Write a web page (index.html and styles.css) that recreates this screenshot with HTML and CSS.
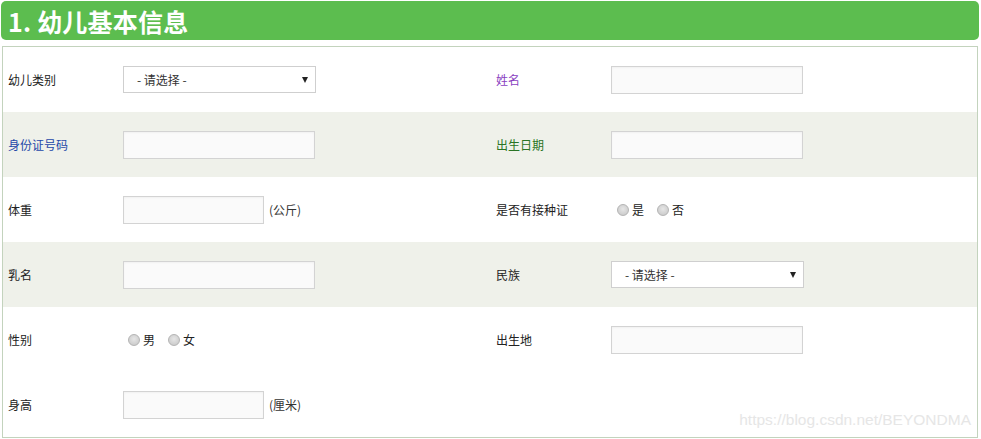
FILE: index.html
```html
<!DOCTYPE html>
<html lang="zh">
<head>
<meta charset="utf-8">
<title>幼儿基本信息</title>
<link rel="stylesheet" href="styles.css">
</head>
<body>
<div class="page">
  <h2 class="title">1. 幼儿基本信息</h2>
  <div class="panel">
    <div class="row">
      <span class="label">幼儿类别</span>
      <span class="field"><span class="select-wrap"><select class="select"><option>- 请选择 -</option></select></span></span>
      <span class="label purple">姓名</span>
      <span class="field"><input class="input" type="text"></span>
    </div>
    <div class="row alt">
      <span class="label blue">身份证号码</span>
      <span class="field"><input class="input" type="text"></span>
      <span class="label green">出生日期</span>
      <span class="field"><input class="input" type="text"></span>
    </div>
    <div class="row">
      <span class="label">体重</span>
      <span class="field"><input class="input short" type="text"><span class="unit">(公斤)</span></span>
      <span class="label">是否有接种证</span>
      <span class="field radios r-offset"><label class="opt"><input class="radio" type="radio" name="v">是</label><label class="opt"><input class="radio" type="radio" name="v">否</label></span>
    </div>
    <div class="row alt">
      <span class="label">乳名</span>
      <span class="field"><input class="input" type="text"></span>
      <span class="label">民族</span>
      <span class="field"><span class="select-wrap"><select class="select"><option>- 请选择 -</option></select></span></span>
    </div>
    <div class="row">
      <span class="label">性别</span>
      <span class="field radios"><label class="opt"><input class="radio" type="radio" name="s">男</label><label class="opt"><input class="radio" type="radio" name="s">女</label></span>
      <span class="label">出生地</span>
      <span class="field"><input class="input" type="text"></span>
    </div>
    <div class="row">
      <span class="label">身高</span>
      <span class="field"><input class="input short" type="text"><span class="unit">(厘米)</span></span>
      <span class="label"></span>
      <span class="field"></span>
    </div>
    <span class="watermark">https://blog.csdn.net/BEYONDMA</span>
  </div>
</div>
</body>
</html>
```
FILE: styles.css
```css
* { box-sizing: border-box; }
html, body { margin: 0; padding: 0; background: #fff; }
body {
  font-family: "Noto Sans CJK SC", "Liberation Sans", sans-serif;
  font-size: 12px;
  color: #222;
}
.page { padding: 1px 2px 0 1px; }
.title {
  margin: 0;
  height: 39px;
  background: #5cbd4f;
  color: #fff;
  border-radius: 5px;
  font-size: 25px;
  font-weight: bold;
  line-height: 41px;
  padding-left: 7px;
  letter-spacing: 0.2px;
}
.panel {
  position: relative;
  margin: 6px 0 0 1px;
  border: 1px solid #c3d3bd;
  width: 976px;
}
.row {
  display: grid;
  grid-template-columns: 5px 115px 373px 115px 1fr;
  align-items: center;
  height: 65px;
}
.row::before { content: ""; }
.row.alt { background: #eff1ea; }
.label { line-height: 16px; }
.purple { color: #8a3fbf; }
.blue { color: #2448a8; }
.green { color: #2a7424; }
.field { display: flex; align-items: center; }
.input {
  width: 192px;
  height: 28px;
  border: 1px solid #d3d3d3;
  background: #fafafa;
  box-shadow: inset 0 1px 2px rgba(0,0,0,0.04);
  margin: 0;
  padding: 0 4px;
  font: inherit;
}
.input.short { width: 141px; }
.unit { margin-left: 5px; color: #333; }
.select-wrap { position: relative; display: inline-block; }
.select {
  appearance: none;
  -webkit-appearance: none;
  width: 193px;
  height: 27px;
  border: 1px solid #cfcfcf;
  background: #fff;
  font: inherit;
  color: #333;
  padding: 0 0 0 13px;
  margin: 0;
  border-radius: 0;
}
.select-wrap::after {
  content: "";
  position: absolute;
  right: 8px;
  top: 11px;
  width: 0;
  height: 0;
  border-left: 3.5px solid transparent;
  border-right: 3.5px solid transparent;
  border-top: 6px solid #222;
  pointer-events: none;
}
.radios { gap: 13px; padding-left: 5px; }
.r-offset { padding-left: 6px; }
.opt { display: inline-flex; align-items: center; color: #222; }
.radio {
  appearance: none;
  -webkit-appearance: none;
  width: 12px;
  height: 12px;
  margin: 0 3px 0 0;
  border-radius: 50%;
  border: 1px solid #b4b4b4;
  background: radial-gradient(circle at 50% 40%, #e6e6e6 0, #d2d2d2 60%, #c4c4c4 100%);
}
.watermark {
  position: absolute;
  right: 6px;
  bottom: 8px;
  font-family: "Liberation Sans", sans-serif;
  font-size: 15.5px;
  color: #e6e6e6;
}
```
